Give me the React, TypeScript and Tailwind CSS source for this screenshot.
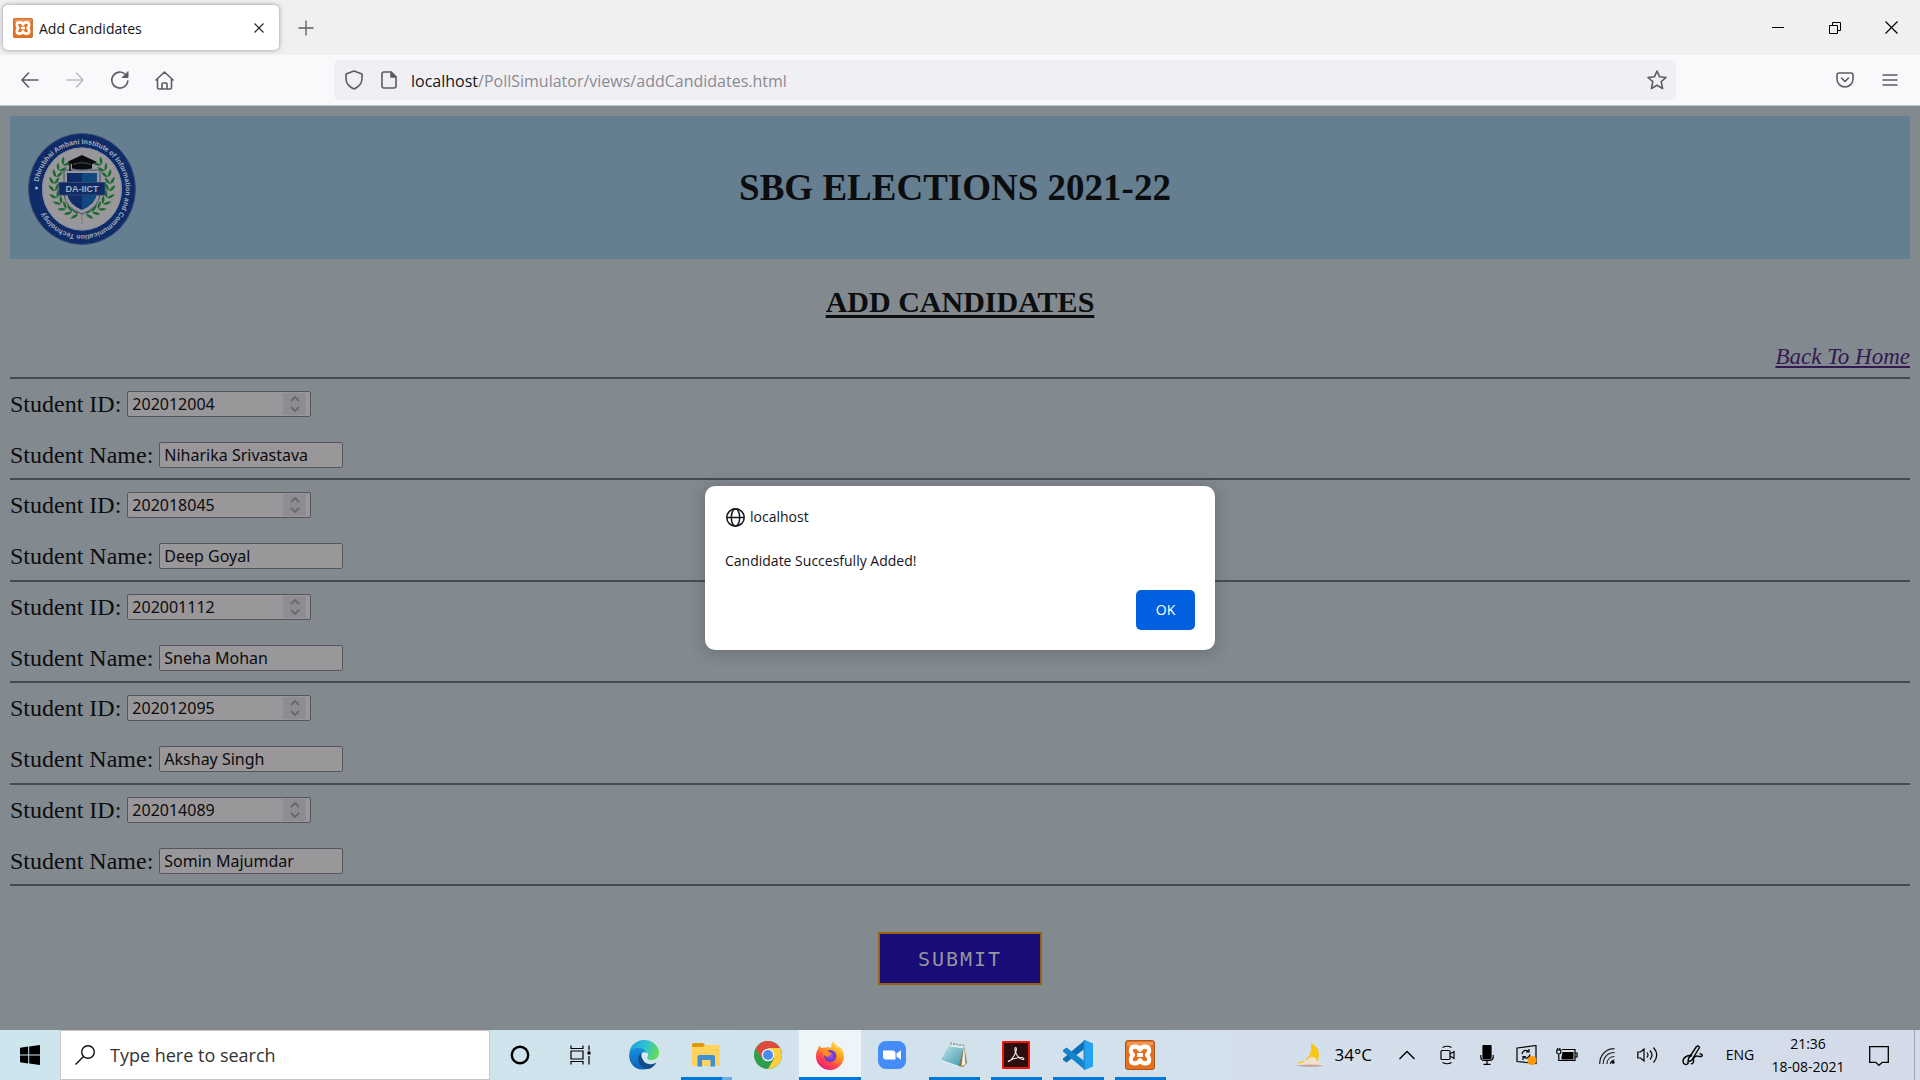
import type { ReactNode } from "react";

const candidates = [
  { id: "202012004", name: "Niharika Srivastava" },
  { id: "202018045", name: "Deep Goyal" },
  { id: "202001112", name: "Sneha Mohan" },
  { id: "202012095", name: "Akshay Singh" },
  { id: "202014089", name: "Somin Majumdar" },
];

function XamppIcon({ size }: { size: number }) {
  return (
    <svg width={size} height={size} viewBox="0 0 30 30" aria-hidden="true">
      <rect x="0.5" y="0.5" width="29" height="29" rx="2.5" fill="#e8701c" stroke="#a9581d" />
      <path d="M2 2h26v3q-13 3-26 1z" fill="#f3a469" opacity="0.7" />
      <path
        d="M15 9.800C13 5.400 5.800 5.400 5.800 10.600c0 2 .9 3 2.200 4.400-1.400 1.200-2.200 2.400-2.200 4.400 0 5.200 7.200 5.200 9.200 .8 2 4.400 9.200 4.400 9.200-.8 0-2-.8-3.200-2.200-4.400 1.300-1.400 2.200-2.400 2.200-4.400C24.200 5.400 17 5.400 15 9.800z"
        fill="none"
        stroke="#fff"
        strokeWidth="4.200"
        strokeLinejoin="round"
      />
      <path d="M12 15h6" stroke="#fff" strokeWidth="4" fill="none" />
    </svg>
  );
}

function Sprig() {
  const leaves = [
    [50, 81, 5], [44, 79, 20], [38, 76, 35], [33, 71, 50], [29, 65, 62],
    [27, 58, 78], [26, 51, 92], [28, 44, 106], [31, 38, 118], [35, 32, 130],
  ];
  return (
    <g>
      {leaves.map(([x, y, a]) => (
        <g key={`${x}-${y}`} transform={`translate(${x} ${y}) rotate(${a})`}>
          <path d="M0 0q-5-1-7-5 6 0 7 5zM0 0q-5 1-7 5 6 0 7-5z" fill="#1c6b30" />
        </g>
      ))}
    </g>
  );
}

function InstituteLogo() {
  return (
    <svg className="mt-0.5 h-28 w-[108px]" viewBox="0 0 108 112" role="img" aria-label="DA-IICT">
      <ellipse cx="54" cy="56" rx="53.500" ry="55.500" fill="#0f2c68" stroke="#39506f" />
      <ellipse cx="54" cy="56" rx="40" ry="41.500" fill="#999799" />
      <ellipse cx="54" cy="56" rx="39.500" ry="41" fill="none" stroke="#7f8da5" />
      <g fill="#a9aeb8" fontFamily="Liberation Sans, sans-serif" fontWeight="700" fontSize="7">
        <path id="ring" d="M10.500 50a43.800 45.500 0 1 1 0 13" fill="none" />
        <text>
          <textPath href="#ring" startOffset="1">
            Dhirubhai Ambani Institute of Information and Communication Technology
          </textPath>
        </text>
      </g>
      <circle cx="8.500" cy="55" r="1.500" fill="#a9aeb8" />
      <Sprig />
      <g transform="translate(108 0) scale(-1 1)">
        <Sprig />
      </g>
      <path d="M54 78v13" stroke="#77777a" />
      <path d="M36 37h36v24q-1 14-18 20-17-6-18-20z" fill="#999799" stroke="#3d4e72" />
      <path d="M39 40h15v37q-14-6-15-17z" fill="#0f2c68" />
      <path d="M54 40h15v20q-1 11-15 17z" fill="#10487f" />
      <rect x="31" y="49.500" width="46" height="12.500" fill="#0f2c68" stroke="#31486f" />
      <text x="54" y="58.800" textAnchor="middle" fontFamily="Liberation Sans, sans-serif" fontWeight="700" fontSize="9" fill="#a9aeb8">
        DA-IICT
      </text>
      <path d="M54 22l15 7-5 2.200v4.300q-10 2-20 0v-4.300L39 29z" fill="#0b0c0f" />
      <path d="M42 30v8" stroke="#0b0c0f" strokeWidth="1.500" />
      <path d="M45 31.500q9-3.500 18 0" stroke="#77777a" strokeWidth=".6" fill="none" />
    </svg>
  );
}

function BrowserChrome() {
  const tool = "flex h-10 w-[45px] items-center justify-center text-[#5b5b66]";
  const line = { fill: "none", stroke: "currentColor", strokeWidth: 1.6, strokeLinecap: "round", strokeLinejoin: "round" } as const;
  return (
    <header className="shrink-0 font-['Open_Sans',sans-serif]">
      <div className="flex h-[55px] items-center justify-between bg-[#f0f0f0] pl-[3px]">
        <div className="flex items-center">
          <div className="flex h-[45px] w-[276px] items-center rounded-[5px] bg-white pl-2.5 shadow-[0_0_4px_rgba(60,60,90,0.55)]">
            <XamppIcon size={20} />
            <span className="ml-1.5 flex-1 pt-0.5 text-sm text-[#15141a]">Add Candidates</span>
            <button aria-label="Close tab" className="flex h-8 w-10 items-center justify-center">
              <svg width="10" height="10" viewBox="0 0 10 10" stroke="#2b2a33" strokeWidth="1.200"><path d="M.5.5l9 9M9.500.5l-9 9" /></svg>
            </button>
          </div>
          <button aria-label="New tab" className="ml-2 flex h-10 w-[38px] items-center justify-center">
            <svg width="16" height="16" viewBox="0 0 16 16" stroke="#5b5b66" strokeWidth="1.300"><path d="M8 .5v15M.5 8h15" /></svg>
          </button>
        </div>
        <div className="flex">
          <button aria-label="Minimize" className="flex h-[55px] w-[57px] items-center justify-center">
            <svg width="12" height="12" viewBox="0 0 12 12" stroke="#000"><path d="M0 5.500h12" /></svg>
          </button>
          <button aria-label="Restore" className="flex h-[55px] w-[57px] items-center justify-center">
            <svg width="12" height="12" viewBox="0 0 12 12" stroke="#000" fill="none"><path d="M.5 3.500h8v8h-8zM3.500 3.500v-3h8v8h-3" /></svg>
          </button>
          <button aria-label="Close window" className="flex h-[55px] w-[57px] items-center justify-center">
            <svg width="13" height="13" viewBox="0 0 13 13" stroke="#000" strokeWidth="1.200"><path d="M.5.5l12 12M12.500.5l-12 12" /></svg>
          </button>
        </div>
      </div>
      <div className="flex h-[51px] items-center border-b border-[#c5c9cb] bg-[#f9f9fb]">
        <nav className="flex pl-[7px]" aria-label="Browser navigation">
          <button aria-label="Back" className={tool}>
            <svg width="18" height="16" viewBox="0 0 18 16" {...line}><path d="M17 8H1M7.500 1L1 8l6.500 7" /></svg>
          </button>
          <button aria-label="Forward" className="flex h-10 w-[45px] items-center justify-center text-[#bcbcc2]">
            <svg width="18" height="16" viewBox="0 0 18 16" {...line}><path d="M1 8h16M10.500 1L17 8l-6.500 7" /></svg>
          </button>
          <button aria-label="Reload" className={tool}>
            <svg width="18" height="18" viewBox="0 0 18 18" {...line}><path d="M16.800 10A8 8 0 1 1 14.600 3.500" /><path d="M17 1v5.500h-5.500z" fill="currentColor" strokeWidth="1" /></svg>
          </button>
          <button aria-label="Home" className={tool}>
            <svg width="19" height="19" viewBox="0 0 19 19" {...line}><path d="M1 9L9.500 1 18 9M2.500 8v8.500q0 1.500 1.500 1.500h11q1.500 0 1.500-1.500V8M7 18v-5q0-1 1-1h3q1 0 1 1v5" /></svg>
          </button>
        </nav>
        <div className="ml-[147px] flex h-10 min-w-0 flex-1 items-center rounded-[5px] bg-[#f0f0f4] pr-[9px] pl-[11px] text-[#5b5b66]">
          <svg width="18" height="20" viewBox="0 0 18 20" {...line}><path d="M9 1l8 3v4.500c0 5-3.500 8.500-8 10.500-4.500-2-8-5.500-8-10.500V4z" /></svg>
          <svg className="mr-3.5 ml-[18px]" width="16" height="18" viewBox="0 0 16 18" {...line}><path d="M3 1h7l5 5v9q0 2-2 2H3q-2 0-2-2V3q0-2 2-2z" /><path d="M10 1v5h5z" fill="currentColor" /></svg>
          <div className="flex-1 truncate pt-0.5 text-base text-[#8a8a92]"><span className="text-[#15141a]">localhost</span>/PollSimulator/views/addCandidates.html</div>
          <button aria-label="Bookmark this page">
            <svg width="20" height="20" viewBox="0 0 20 20" {...line}><path d="M10 1l2.600 5.800 6.400.7-4.800 4.200 1.400 6.800L10 15.200 4.400 18.500l1.400-6.800L1 7.500l6.400-.7z" /></svg>
          </button>
        </div>
        <div className="ml-[146px] flex pr-2">
          <button aria-label="Save to Pocket" className={tool}>
            <svg width="18" height="16" viewBox="0 0 18 16" {...line}><path d="M3 1h12q2 0 2 2v4a8 8 0 0 1-16 0V3q0-2 2-2zM5.500 6L9 9.500 12.500 6" /></svg>
          </button>
          <button aria-label="Open menu" className={tool}>
            <svg width="16" height="12" viewBox="0 0 16 12" {...line} strokeWidth="1.400"><path d="M1 1h14M1 6h14M1 11h14" /></svg>
          </button>
        </div>
      </div>
    </header>
  );
}

const field = "h-[26px] w-[184px] rounded-[2px] border border-[#56555e] bg-[#999799] pl-1 font-['Noto_Sans',sans-serif] text-base text-[#0c0c0f]";

function CandidateRow({ id, name, index }: { id: string; name: string; index: number }) {
  return (
    <div className="flex flex-col border-t-2 border-t-[#484b4d] pt-3">
      <div className="flex h-[26px] items-center">
        <label htmlFor={`id-${index}`} className="pr-1.5 leading-6">Student ID:</label>
        <div className="relative flex">
          <input id={`id-${index}`} inputMode="numeric" defaultValue={id} className={field} />
          <div className="absolute top-0.5 right-[5px] flex h-[22px] w-[23px] items-center justify-center bg-[#8d8c92]">
            <svg width="10" height="16" viewBox="0 0 10 16" fill="none" stroke="#68676e" strokeWidth="1.800"><path d="M1 5l4-4 4 4M1 11l4 4 4-4" /></svg>
          </div>
        </div>
      </div>
      <div className="mt-[25px] flex h-[26px] items-center">
        <label htmlFor={`name-${index}`} className="pr-1.5 leading-6">Student Name:</label>
        <input id={`name-${index}`} type="text" defaultValue={name} className={field} />
      </div>
    </div>
  );
}

function AlertDialog() {
  return (
    <div className="absolute inset-0 flex items-center justify-center">
      <div role="alertdialog" aria-labelledby="alert-host" aria-describedby="alert-text" className="w-[510px] rounded-[10px] bg-white px-5 pt-[21px] pb-5 font-['Open_Sans',sans-serif] text-sm text-[#15141a] shadow-[0_2px_16px_rgba(40,45,50,0.3)]">
        <div className="flex h-5 items-center gap-[5px] pl-px">
          <svg width="19" height="19" viewBox="0 0 19 19" fill="none" stroke="#15141a" strokeWidth="1.500"><circle cx="9.500" cy="9.500" r="8.700" /><ellipse cx="9.500" cy="9.500" rx="4.200" ry="8.700" /><path d="M1 9.500h17" /></svg>
          <h2 id="alert-host" className="font-medium">localhost</h2>
        </div>
        <p id="alert-text" className="mt-6 h-5 leading-5">Candidate Succesfully Added!</p>
        <div className="mt-[19px] flex justify-end">
          <button className="h-10 w-[59px] rounded-[5px] bg-[#0060df] font-medium text-white">OK</button>
        </div>
      </div>
    </div>
  );
}

function Page() {
  return (
    <main className="relative flex flex-1 flex-col bg-[#82898f] px-2.5 pt-2.5 font-['Liberation_Serif',serif] text-2xl text-[#0c0d0f]">
      <div className="grid h-[143px] grid-cols-[1fr_auto_1fr] items-center bg-[#657f90] pl-[18px]">
        <InstituteLogo />
        <h1 className="pr-7 text-[37px] leading-10 font-bold">SBG ELECTIONS 2021-22</h1>
      </div>
      <h2 className="mt-[26px] text-center text-[30px] leading-[34px] font-bold underline decoration-[3px] underline-offset-[3px]">ADD CANDIDATES</h2>
      <div className="mt-[25px] mb-2 text-right leading-[24px]">
        <a href="#home" className="text-[23px] text-[#331a52] italic underline underline-offset-2">Back To Home</a>
      </div>
      <form>
        <div className="grid min-h-[509px] auto-rows-fr border-b-2 border-[#484b4d]">
          {candidates.map((c, i) => (
            <CandidateRow key={c.id} id={c.id} name={c.name} index={i} />
          ))}
        </div>
        <div className="mt-[46px] flex justify-center">
          <button type="button" className="h-[53px] w-[164px] border-2 border-[#99620f] bg-[#170c78] font-['DejaVu_Sans_Mono',monospace] text-xl tracking-widest text-[#96959c]">SUBMIT</button>
        </div>
      </form>
      <AlertDialog />
    </main>
  );
}

function TaskButton({ label, running, active, children }: { label: string; running?: boolean; active?: boolean; children: ReactNode }) {
  return (
    <button
      aria-label={label}
      className={`flex h-full w-[62px] flex-col items-center ${active ? "bg-[#edf5f8]" : ""}`}
    >
      <span className="flex flex-1 items-center pt-[3px]">{children}</span>
      <span className={`h-[3px] ${active ? "w-full" : "w-[51px]"} ${running ? "bg-[#0078d7]" : ""}`} />
    </button>
  );
}

function Tray({ label, children }: { label: string; children: ReactNode }) {
  return <button aria-label={label} className="flex h-full w-10 items-center justify-center">{children}</button>;
}

function Taskbar() {
  const thin = { fill: "none", stroke: "#000", strokeWidth: 1.2 };
  return (
    <footer className="flex h-[50px] shrink-0 items-center bg-linear-to-r from-[#cde5ed] via-[#d2e2ec] to-[#d4dbe9] font-['Open_Sans',sans-serif] text-black">
      <button aria-label="Start" className="flex h-full w-[60px] items-center justify-center">
        <svg width="20" height="20" viewBox="0 0 20 20"><path d="M0 2.700l8.200-1.100v7.900H0zM9.200 1.400L20 0v9.500H9.200zM0 10.500h8.200v7.900L0 17.300zM9.200 10.500H20V20L9.200 18.600z" /></svg>
      </button>
      <label className="flex h-full w-[430px] items-center border border-[#c6c6c8] bg-white pl-3.5">
        <svg width="20" height="20" viewBox="0 0 20 20" fill="none" stroke="#111" strokeWidth="1.400"><circle cx="13" cy="7" r="6.300" /><path d="M8.500 11.500L.5 19.500" /></svg>
        <input aria-label="Search" placeholder="Type here to search" className="ml-[15px] flex-1 text-lg placeholder:text-[#333] focus:outline-none" />
      </label>
      <div className="flex h-full w-[123px]">
        <button aria-label="Cortana" className="flex h-full w-[60px] items-center justify-center"><svg width="20" height="20" viewBox="0 0 20 20"><circle cx="10" cy="10" r="8.200" fill="none" stroke="#000" strokeWidth="2.400" /></svg></button>
        <button aria-label="Task view" className="flex h-full w-[60px] items-center justify-center">
          <svg width="21" height="20" viewBox="0 0 21 20" {...thin}><path d="M1 .5v3h12v-3M1 19.500v-3h12v3M1 6h12v8H1zM19 .5v5M19 11v8.500" /><path d="M17.500 6.500h3v3h-3z" fill="#000" stroke="none" /></svg>
        </button>
      </div>
      <TaskButton label="Edge">
        <svg width="30" height="30" viewBox="0 0 30 30">
          <defs>
            <linearGradient id="eg" x1="0" y1=".3" x2="1" y2=".6"><stop stopColor="#1e9ade" /><stop offset=".5" stopColor="#2fc3d0" /><stop offset="1" stopColor="#64dd55" /></linearGradient>
            <linearGradient id="eb" x1="0" y1="0" x2="0" y2="1"><stop stopColor="#1690dd" /><stop offset="1" stopColor="#0b62b8" /></linearGradient>
          </defs>
          <path d="M.3 13C1 5.500 7.500 0 15 0c9 0 15 6.500 15 12.500 0 5-3.500 7.500-7.500 7.500-3.500 0-5-1.500-4-3 1.500-2 .5-5.500-3.500-6.500C9 9 3 10 .3 13z" fill="url(#eg)" />
          <path d="M.2 14C1.500 9.500 6 7.500 10 8c4.500.5 8 3.500 8 6.500l-3-2c-3 .5-4.500 3-4 6 .7 5 4 8.500 9 9.500C13 31 7 29.500 3.500 25 .8 21.500 0 18 .2 14z" fill="url(#eb)" />
          <path d="M11.500 13.500c-3 3-3 8 0 12 3.500 4 9 4.500 12 1.500 2-1.500 3.500-3.300 4-4.500-4 2.500-9.500 2.500-12.500-1-1.800-2-2.200-5-1-7.500z" fill="#114a8b" />
          <path d="M12.500 14c1.500-2.500 5-2 5.800.3.700 2-1.500 2.700 0 4.700-3 2.500-6.800-1-5.800-5z" fill="#dcecf2" />
        </svg>
      </TaskButton>
      <button aria-label="File Explorer" className="flex h-full w-[62px] flex-col items-center">
        <span className="flex flex-1 items-center pt-[3px]">
          <svg width="28" height="24" viewBox="0 0 28 24"><path d="M0 1.500Q0 0 1.500 0H11l2 2v3H0z" fill="#dc9a07" /><path d="M0 4h11l2-2h13.500q1 0 1 1v20H0z" fill="#ffd35e" /><path d="M5.500 23.500V14q0-2 2-2H21q2 0 2 2v9.500h-4.500V17H10v6.500z" fill="#3f8fd2" /></svg>
        </span>
        <span className="flex h-[3px] w-[51px]"><span className="w-[41px] bg-[#0078d7]" /><span className="flex-1 bg-[#66aee6]" /></span>
      </button>
      <TaskButton label="Chrome">
        <svg width="28" height="28" viewBox="0 0 28 28">
          <circle cx="14" cy="14" r="14" fill="#2f9e4c" />
          <path d="M14 14L1.900 7A14 14 0 0 1 26.100 7z" fill="#dd4b3e" />
          <path d="M14 7h12.100A14 14 0 0 1 14 28l6-10.500z" fill="#ffcd42" />
          <path d="M1.900 7l6 10.500L14 7z" fill="#dd4b3e" />
          <circle cx="14" cy="14" r="6.300" fill="#f4f4f4" /><circle cx="14" cy="14" r="5" fill="#4a8af4" />
        </svg>
      </TaskButton>
      <TaskButton label="Firefox" running active>
        <svg width="28" height="29" viewBox="0 0 28 29">
          <defs>
            <linearGradient id="ff" x1=".8" y1="0" x2=".2" y2="1"><stop stopColor="#fff04a" /><stop offset=".4" stopColor="#ff9a1f" /><stop offset=".7" stopColor="#ff4448" /><stop offset="1" stopColor="#e21587" /></linearGradient>
            <radialGradient id="fp"><stop stopColor="#a84ff0" /><stop offset="1" stopColor="#5b38c9" /></radialGradient>
          </defs>
          <path d="M17.500 0c.5 3 3.500 4.500 5.500 7l.5-1.800C26.500 8 28 12 28 15.500 28 23 21.500 29 14 29S0 23 0 15.500C0 12 1 9 2.500 7L3 4.500 5.500 7c1.500-.6 3-.7 4.500-.3L11 6c1.500 0 3 .5 4 1 0-3 .8-5.500 2.500-7z" fill="url(#ff)" />
          <circle cx="14.300" cy="15" r="6" fill="url(#fp)" />
          <path d="M6 9c3-1 6 0 7.500 2.500 1.500.2 2.500.8 2.500 1.300-1 1.400-3.500 1.200-4 3.200-2 .5-4.500-2-6-7z" fill="#ff8a25" />
        </svg>
      </TaskButton>
      <TaskButton label="Zoom">
        <svg width="28" height="28" viewBox="0 0 28 28"><rect width="28" height="28" rx="8" fill="#468cf8" /><path d="M5 9.500h9.500q3 0 3 3v6H8q-3 0-3-3zM18.500 12.500L23 9.300v9.400l-4.500-3.200z" fill="#fff" /></svg>
      </TaskButton>
      <TaskButton label="Notepad" running>
        <svg width="28" height="28" viewBox="0 0 28 28">
          <defs><linearGradient id="np" x1="0" y1="0" x2="1" y2="1"><stop stopColor="#bfe6ea" /><stop offset="1" stopColor="#3f99ab" /></linearGradient></defs>
          <path d="M24 4l3 18-4 4-5-1z" fill="#8f7a4c" /><path d="M24 4l1.500 19-4 2.500z" fill="#f1f1ea" />
          <path d="M10 3l14 2-5.500 20L1 19z" fill="url(#np)" /><path d="M10 3l14 2-.8 2.500L9 5.300z" fill="#dfe9ea" /><path d="M11 3.500V1.500M14 4V2M17 4.300V2.500M20 4.800V3M23 5V3.500" stroke="#666" />
          <path d="M1 19l17.500 6v1L1 20z" fill="#e7f3f4" />
        </svg>
      </TaskButton>
      <TaskButton label="Acrobat Reader" running>
        <svg width="28" height="28" viewBox="0 0 28 28"><rect width="28" height="28" rx="1" fill="#f61505" /><rect x="2" y="2" width="24" height="24" fill="#2b0f0f" /><path d="M6.500 20.500c2-.5 6-5.500 7.300-9.500.8-2.500.8-4.500-.2-4.500s-1 2.500 0 5c1.500 3.500 4.500 6.500 7 7 2 .2 1.500-2-1.500-2-4 0-9 1.500-11.500 3-1.500 1-1.600 1.300-1.100 1z" fill="none" stroke="#f2e9e9" strokeWidth="1.100" /></svg>
      </TaskButton>
      <TaskButton label="Visual Studio Code" running>
        <svg width="30" height="30" viewBox="0 0 30 30"><path d="M22 0l8 3.500v23L22 30z" fill="#26a3ee" /><path d="M22 0v8.500L3.500 22.500 0 20v-1.500z" fill="#0b70b8" /><path d="M22 30v-8.500L3.500 7.500 0 10v1.500z" fill="#1484cf" /><path d="M22 0v30l-1.500-.8V.8z" fill="#1b8cd8" /></svg>
      </TaskButton>
      <TaskButton label="XAMPP" running><XamppIcon size={30} /></TaskButton>
      <div className="ml-auto flex h-full items-center">
        <button aria-label="Weather" className="flex items-center gap-[11px] pr-[15px] text-[17px]">
          <svg width="28" height="25" viewBox="0 0 28 25"><path d="M15 0c8 4 10 12 6 18-5 6-15 6-20 1 8 1 16-6 14-19z" fill="#f8c510" /><path d="M2 22q1-2.500 5-2 1-4 4.500-3 2-4.500 6-3 3 1 3 4 5 0 7 4-13 2-25.500 0z" fill="#efe0cf" /><path d="M0 22.500q14-2 28 0-14 3-28 0z" fill="#bfa9a0" /></svg>
          <span>34°C</span>
        </button>
        <Tray label="Show hidden icons"><svg width="16" height="10" viewBox="0 0 16 10" {...thin} strokeWidth="1.400"><path d="M.5 9L8 1.500 15.500 9" /></svg></Tray>
        <Tray label="Meet now"><svg width="16" height="20" viewBox="0 0 16 20" {...thin}><rect x="2" y="5.500" width="9" height="9" rx="1" /><path d="M11 9l4-2.500v7L11 11M3.500 2.500q5-2.500 9 0M3.500 17.500q5 2.500 9 0" /></svg></Tray>
        <Tray label="Microphone"><svg width="14" height="20" viewBox="0 0 14 20" {...thin}><rect x="3" y="0" width="8" height="14" rx="1" fill="#000" /><path d="M.8 10v2q0 3.500 3.500 3.500h5.400q3.500 0 3.500-3.500v-2M7 15.500v4M3.500 19.400h7" /></svg></Tray>
        <Tray label="Updates"><svg width="22" height="20" viewBox="0 0 22 20" {...thin}><path d="M1 3l19-2.500v18L1 16.500z" /><path d="M6 9q1-4 5-3.500l2 1.500M13 4v3h-3M14 9.500q-1 4-5 3.500L7 11.500M7 15v-3.500h3" /><circle cx="16" cy="15.500" r="4.500" fill="#ff9800" stroke="none" /></svg></Tray>
        <Tray label="Battery"><svg width="22" height="14" viewBox="0 0 22 14" {...thin}><path d="M6 1.500h13v11H6M19.500 5h1.500v4h-1.500" /><path d="M6.500 4h11v7.500h-12v-2z" fill="#000" stroke="none" /><path d="M.8 2v2.500q0 1.500 2 1.500t2-1.500V2zM1.800 2V0M3.800 2V0M2.800 6v6.500H6" /></svg></Tray>
        <Tray label="Wi-Fi"><svg className="mt-0.5" width="16" height="16" viewBox="0 0 16 16" {...thin} stroke="#222"><path d="M.7 16C.7 7 7 .7 15.500.7M4.200 16C4.200 9 9 4.500 15.500 4.500M8 16c0-4.500 3-7.500 7.500-7.500M11.500 16q0-3.500 4-4" /><circle cx="14" cy="14.300" r="1.500" fill="#000" stroke="none" /></svg></Tray>
        <Tray label="Volume"><svg width="21" height="18" viewBox="0 0 21 18" {...thin}><path d="M.8 6h2.700L7 3v12l-3.500-3H.8zM10 6.500q2 2.500 0 5M13 4.500q4 4.500 0 9M16.500 1.500q6.500 7.500 0 15" /></svg></Tray>
        <button aria-label="Pen" className="flex h-full w-[50px] items-center justify-center"><svg width="21" height="21" viewBox="0 0 21 21" {...thin} strokeWidth="1.400"><path d="M6.500 13.500L14.500 1.500q2-1.500 3 1L9.500 15.500l-3.500 1.500zM10 11C6 9.500 1 12.500 1 16.500c0 3 4 4 5.500 1.500M9 18.500c1 1 3-1 2.500-3s1-4.500 3.500-4.500c2 0 2 1 4.500.3 1.500-.8.500-3-2-2.300" /></svg></button>
        <button className="flex h-full w-[46px] items-center justify-center text-sm">ENG</button>
        <div className="w-[90px] text-center text-sm leading-[23px]"><p>21:36</p><p>18-08-2021</p></div>
        <button aria-label="Notifications" className="flex h-full w-[52px] items-center justify-center"><svg className="mt-0.5" width="20" height="20" viewBox="0 0 20 20" {...thin} strokeWidth="1.300"><path d="M.7.700h18.600v15.600h-6L10 19.300 6.700 16.300h-6z" /></svg></button>
        <div className="ml-[9px] h-full w-1.5 border-l border-[#9aa2b3]" />
      </div>
    </footer>
  );
}

export default function App() {
  return (
    <div className="flex min-h-screen flex-col">
      <BrowserChrome />
      <Page />
      <Taskbar />
    </div>
  );
}
